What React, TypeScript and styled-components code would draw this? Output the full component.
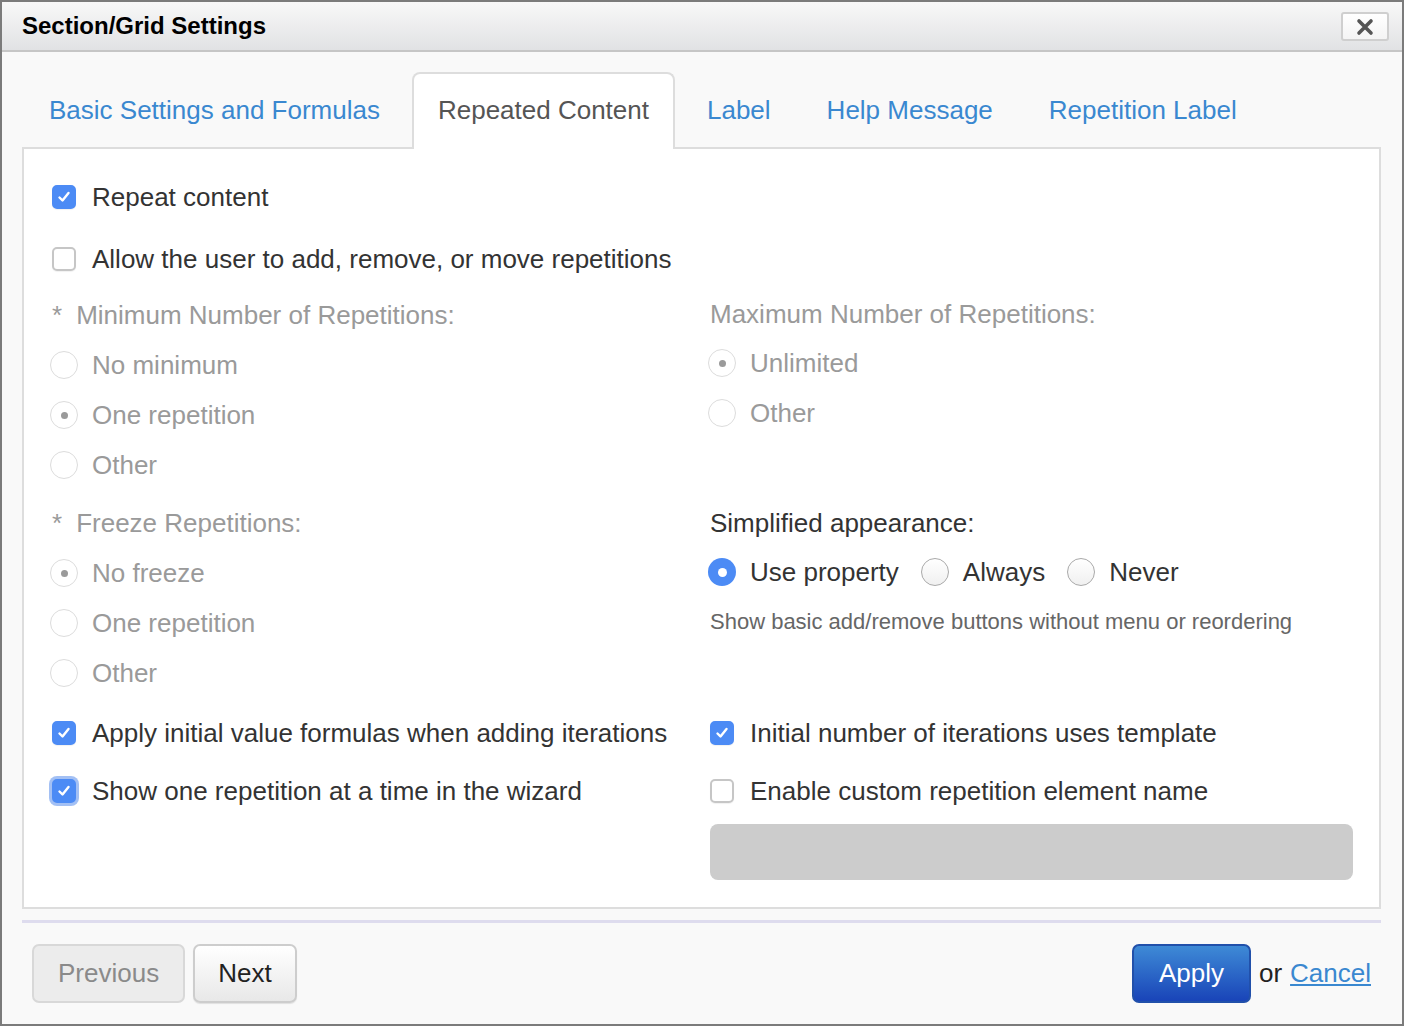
import React from "react";
import styled, { createGlobalStyle, css } from "styled-components";

const Global = createGlobalStyle`
  html, body { margin: 0; padding: 0; background: #fff; }
  body { font-family: "Liberation Sans", Arial, Helvetica, sans-serif; }
  * { box-sizing: border-box; }
`;

const Dialog = styled.div`
  width: 1404px;
  height: 1026px;
  border: 2px solid #7b7b7b;
  display: flex;
  flex-direction: column;
  background: #f9f9f9;
`;

const Header = styled.div`
  flex: none;
  height: 50px;
  display: flex;
  align-items: center;
  justify-content: space-between;
  padding: 0 13px 0 20px;
  background: linear-gradient(#f8f8f8, #e1e2e4);
  border-bottom: 2px solid #c6c6c6;
`;

const Title = styled.h1`
  margin: 0;
  font-size: 24px;
  font-weight: bold;
  color: #000;
`;

const CloseButton = styled.button`
  width: 48px;
  height: 29px;
  margin-top: 1px;
  display: flex;
  align-items: center;
  justify-content: center;
  background: linear-gradient(#ffffff, #f4f4f4);
  border: 2px solid #cfcfcf;
  border-radius: 3px;
  padding: 0;
`;

const Body = styled.div`
  flex: 1;
  display: flex;
  flex-direction: column;
  padding: 20px 21px 0 20px;
`;

const TabList = styled.div`
  display: flex;
  padding-left: 3px;
  margin-bottom: -2px;
  position: relative;
  z-index: 1;
`;

const Tab = styled.div<{ $active?: boolean }>`
  height: 77px;
  display: flex;
  align-items: center;
  padding: 0 22px 2px;
  margin-right: 8px;
  font-size: 26px;
  color: #3a88d0;
  border: 2px solid transparent;
  border-bottom: none;
  border-radius: 8px 8px 0 0;
  ${(p) =>
    p.$active &&
    css`
      color: #555;
      background: #fff;
      border-color: #dddddd;
      padding: 0 24px 2px;
    `}
`;

const Panel = styled.div`
  flex: 1;
  background: #fff;
  border: 2px solid #dddddd;
  padding: 24px 26px 25px 26px;
`;

const CheckRow = styled.label<{ $mt?: number }>`
  display: flex;
  align-items: center;
  gap: 16px;
  height: 48px;
  margin-top: ${(p) => p.$mt ?? 0}px;
  font-size: 26px;
  color: #333;
`;

const CheckBoxBox = styled.span<{ $checked?: boolean; $focus?: boolean }>`
  flex: none;
  width: 24px;
  height: 24px;
  margin-left: 2px;
  border-radius: 5px;
  display: flex;
  align-items: center;
  justify-content: center;
  background: #fff;
  border: 2px solid #c6c6c6;
  box-shadow: 0 1px 1px rgba(0, 0, 0, 0.06);
  ${(p) =>
    p.$checked &&
    css`
      background: #4c8bf5;
      border-color: #4c8bf5;
    `}
  ${(p) =>
    p.$focus &&
    css`
      box-shadow: 0 0 0 3px rgba(88, 140, 235, 0.55);
    `}
`;

const Row = styled.div<{ $mt?: number }>`
  display: grid;
  grid-template-columns: 658px 1fr;
  margin-top: ${(p) => p.$mt ?? 0}px;
`;

const Column = styled.div`
  display: flex;
  flex-direction: column;
`;

const FieldLabel = styled.div<{ $h?: number; $disabled?: boolean }>`
  height: ${(p) => p.$h ?? 50}px;
  display: flex;
  align-items: center;
  padding-left: 2px;
  font-size: 26px;
  color: ${(p) => (p.$disabled ? "#9a9a9a" : "#333")};
`;

const Asterisk = styled.span`
  margin-right: 14px;
`;

const RadioRow = styled.label<{ $h?: number; $disabled?: boolean }>`
  height: ${(p) => p.$h ?? 50}px;
  display: flex;
  align-items: center;
  font-size: 26px;
  color: ${(p) => (p.$disabled ? "#9a9a9a" : "#333")};
`;

const RadioOption = styled.span`
  display: flex;
  align-items: center;
  gap: 14px;
  margin-right: 22px;
`;

const RadioCircle = styled.span<{ $checked?: boolean; $disabled?: boolean }>`
  flex: none;
  width: 28px;
  height: 28px;
  border-radius: 50%;
  display: flex;
  align-items: center;
  justify-content: center;
  ${(p) =>
    p.$disabled
      ? css`
          background: #fff;
          border: 1.5px solid #dcdcdc;
        `
      : p.$checked
      ? css`
          background: #4c8bf5;
          border: none;
        `
      : css`
          background: linear-gradient(#ffffff, #f0f0f0);
          border: 1.5px solid #a9a9a9;
        `}
`;

const RadioDot = styled.span<{ $disabled?: boolean }>`
  width: ${(p) => (p.$disabled ? 7 : 9)}px;
  height: ${(p) => (p.$disabled ? 7 : 9)}px;
  border-radius: 50%;
  background: ${(p) => (p.$disabled ? "#9a9a9a" : "#fff")};
`;

const HelpText = styled.div`
  height: 52px;
  display: flex;
  align-items: center;
  padding-left: 2px;
  font-size: 22px;
  color: #666;
`;

const NameInput = styled.input`
  margin: 9px 0 0 2px;
  height: 56px;
  width: calc(100% - 2px);
  border: none;
  border-radius: 8px;
  background: #cccccc;
`;

const Footer = styled.div`
  flex: none;
  margin-top: 11px;
  border-top: 3px solid #dedcee;
  padding: 21px 10px;
  display: flex;
  align-items: center;
  justify-content: space-between;
`;

const ButtonGroup = styled.div`
  display: flex;
  align-items: center;
  gap: 8px;
`;

const Button = styled.button<{ $variant: "disabled" | "default" | "primary" }>`
  height: 59px;
  padding: 0 24px;
  font-family: inherit;
  font-size: 26px;
  border-radius: 7px;
  border: 2px solid #cdcdcd;
  ${(p) =>
    p.$variant === "disabled"
      ? css`
          background: #ececec;
          border-color: #d8d8d8;
          color: #8a8a8a;
        `
      : p.$variant === "default"
      ? css`
          background: linear-gradient(#ffffff, #e8e8e8);
          color: #222;
          box-shadow: 0 1px 1px rgba(0, 0, 0, 0.1);
          padding: 0 23px;
        `
      : css`
          background: linear-gradient(#3e8ad6, #1944b8);
          border-color: #2150aa;
          color: #fff;
          padding: 0 25px;
        `}
`;

const OrText = styled.span`
  font-size: 26px;
  color: #222;
  margin-right: 8px;
`;

const CancelLink = styled.a`
  font-size: 26px;
  color: #3a88d0;
  text-decoration: underline;
`;

const Check = ({ checked, focus }: { checked?: boolean; focus?: boolean }) => (
  <CheckBoxBox $checked={checked} $focus={focus}>
    {checked && (
      <svg width="16" height="16" viewBox="0 0 16 16">
        <polyline
          points="3.5,8.5 6.5,11.5 12.5,4"
          fill="none"
          stroke="#fff"
          strokeWidth="2.4"
          strokeLinecap="round"
          strokeLinejoin="round"
        />
      </svg>
    )}
  </CheckBoxBox>
);

const Radio = ({ checked, disabled }: { checked?: boolean; disabled?: boolean }) => (
  <RadioCircle $checked={checked} $disabled={disabled}>
    {checked && <RadioDot $disabled={disabled} />}
  </RadioCircle>
);

export default function App() {
  return (
    <>
      <Global />
      <Dialog>
        <Header>
          <Title>Section/Grid Settings</Title>
          <CloseButton aria-label="Close">
            <svg width="18" height="18" viewBox="0 0 18 18">
              <path d="M3 3 L15 15 M15 3 L3 15" stroke="#555" strokeWidth="3.6" strokeLinecap="round" />
            </svg>
          </CloseButton>
        </Header>
        <Body>
          <TabList>
            <Tab>Basic Settings and Formulas</Tab>
            <Tab $active>Repeated Content</Tab>
            <Tab>Label</Tab>
            <Tab>Help Message</Tab>
            <Tab>Repetition Label</Tab>
          </TabList>
          <Panel>
            <CheckRow>
              <Check checked />
              Repeat content
            </CheckRow>
            <CheckRow $mt={14}>
              <Check />
              Allow the user to add, remove, or move repetitions
            </CheckRow>

            <Row $mt={7}>
              <Column>
                <FieldLabel $disabled>
                  <Asterisk>*</Asterisk>Minimum Number of Repetitions:
                </FieldLabel>
                <RadioRow $disabled>
                  <RadioOption>
                    <Radio disabled />
                    No minimum
                  </RadioOption>
                </RadioRow>
                <RadioRow $disabled>
                  <RadioOption>
                    <Radio disabled checked />
                    One repetition
                  </RadioOption>
                </RadioRow>
                <RadioRow $disabled>
                  <RadioOption>
                    <Radio disabled />
                    Other
                  </RadioOption>
                </RadioRow>
              </Column>
              <Column>
                <FieldLabel $h={48} $disabled>
                  Maximum Number of Repetitions:
                </FieldLabel>
                <RadioRow $disabled>
                  <RadioOption>
                    <Radio disabled checked />
                    Unlimited
                  </RadioOption>
                </RadioRow>
                <RadioRow $disabled>
                  <RadioOption>
                    <Radio disabled />
                    Other
                  </RadioOption>
                </RadioRow>
              </Column>
            </Row>

            <Row $mt={8}>
              <Column>
                <FieldLabel $disabled>
                  <Asterisk>*</Asterisk>Freeze Repetitions:
                </FieldLabel>
                <RadioRow $disabled>
                  <RadioOption>
                    <Radio disabled checked />
                    No freeze
                  </RadioOption>
                </RadioRow>
                <RadioRow $disabled>
                  <RadioOption>
                    <Radio disabled />
                    One repetition
                  </RadioOption>
                </RadioRow>
                <RadioRow $disabled>
                  <RadioOption>
                    <Radio disabled />
                    Other
                  </RadioOption>
                </RadioRow>
              </Column>
              <Column>
                <FieldLabel>Simplified appearance:</FieldLabel>
                <RadioRow $h={48}>
                  <RadioOption>
                    <Radio checked />
                    Use property
                  </RadioOption>
                  <RadioOption>
                    <Radio />
                    Always
                  </RadioOption>
                  <RadioOption>
                    <Radio />
                    Never
                  </RadioOption>
                </RadioRow>
                <HelpText>Show basic add/remove buttons without menu or reordering</HelpText>
              </Column>
            </Row>

            <Row $mt={11}>
              <CheckRow>
                <Check checked />
                Apply initial value formulas when adding iterations
              </CheckRow>
              <CheckRow>
                <Check checked />
                Initial number of iterations uses template
              </CheckRow>
            </Row>

            <Row $mt={10}>
              <Column>
                <CheckRow>
                  <Check checked focus />
                  Show one repetition at a time in the wizard
                </CheckRow>
              </Column>
              <Column>
                <CheckRow>
                  <Check />
                  Enable custom repetition element name
                </CheckRow>
                <NameInput disabled />
              </Column>
            </Row>
          </Panel>
          <Footer>
            <ButtonGroup>
              <Button $variant="disabled">Previous</Button>
              <Button $variant="default">Next</Button>
            </ButtonGroup>
            <ButtonGroup>
              <Button $variant="primary">Apply</Button>
              <span>
                <OrText>or</OrText>
                <CancelLink href="#">Cancel</CancelLink>
              </span>
            </ButtonGroup>
          </Footer>
        </Body>
      </Dialog>
    </>
  );
}
